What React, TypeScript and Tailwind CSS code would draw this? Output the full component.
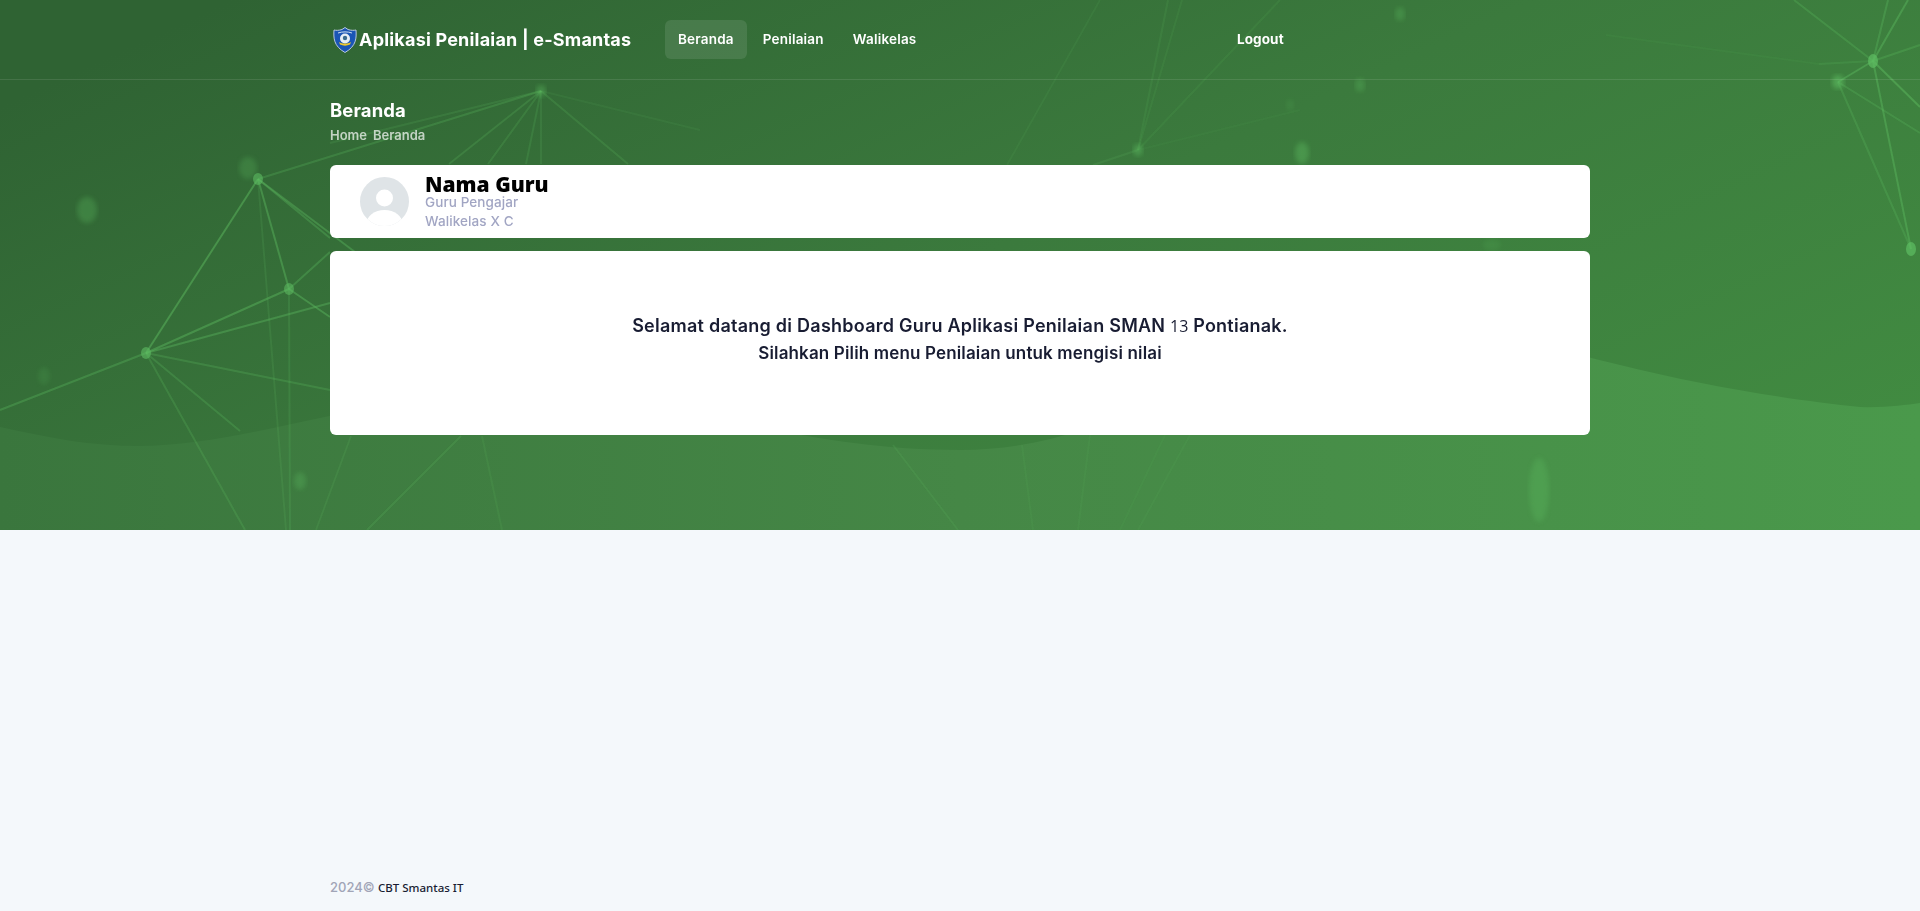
const poppins = "font-['Inter','Noto_Sans',sans-serif]";

// network drawn behind the header: [x1, y1, x2, y2, opacity]
const lines: number[][] = [
  [258, 179, 146, 353, 0.5], [258, 179, 289, 289, 0.45], [146, 353, 289, 289, 0.45], [146, 353, 330, 303, 0.4],
  [146, 353, 0, 410, 0.35], [146, 353, 245, 530, 0.25], [146, 353, 240, 431, 0.28], [146, 353, 330, 390, 0.28],
  [258, 179, 541, 91, 0.28], [258, 179, 355, 252, 0.4], [258, 179, 330, 238, 0.35], [258, 179, 286, 530, 0.16],
  [289, 289, 290, 530, 0.2], [289, 289, 330, 317, 0.45], [289, 289, 330, 252, 0.35], [541, 91, 449, 164, 0.24],
  [541, 91, 488, 164, 0.22], [541, 91, 526, 164, 0.2], [541, 91, 541, 164, 0.16], [541, 91, 628, 164, 0.22],
  [541, 91, 700, 130, 0.1], [541, 91, 330, 143, 0.18], [461, 436, 367, 530, 0.22], [482, 436, 502, 530, 0.14],
  [351, 436, 316, 530, 0.16], [893, 445, 958, 530, 0.16], [1022, 445, 1033, 530, 0.1], [1090, 435, 1078, 530, 0.1],
  [1165, 435, 1120, 530, 0.08], [1190, 435, 1138, 530, 0.1], [1873, 61, 1794, 0, 0.3], [1873, 61, 1888, 0, 0.35],
  [1873, 61, 1908, 0, 0.45], [1873, 61, 1920, 107, 0.5], [1873, 61, 1911, 249, 0.45], [1838, 82, 1911, 249, 0.28],
  [1873, 61, 1838, 82, 0.45], [1873, 61, 1920, 45, 0.3], [1873, 61, 1819, 64, 0.2], [1819, 64, 1606, 35, 0.08],
  [1838, 82, 1920, 133, 0.28], [1138, 150, 1168, 0, 0.14], [1138, 150, 1182, 0, 0.12], [1138, 150, 1280, 0, 0.12],
  [1100, 0, 1007, 165, 0.1], [1138, 150, 1093, 165, 0.16], [1138, 150, 1300, 110, 0.07],
];

// [cx, cy, rx, ry, opacity, blur]
const dots: number[][] = [
  [258, 179, 5, 6, 0.6, 0], [248, 168, 9, 11, 0.25, 1], [289, 289, 5, 6, 0.55, 0], [146, 353, 5, 6, 0.6, 0],
  [541, 91, 5, 6, 0.4, 1], [87, 210, 10, 13, 0.3, 1], [44, 376, 6, 9, 0.15, 1], [300, 481, 6, 9, 0.3, 1],
  [1873, 61, 5, 7, 0.7, 0], [1838, 82, 6, 7, 0.6, 1], [1911, 249, 5, 7, 0.7, 0], [1400, 14, 5, 7, 0.3, 1],
  [1360, 85, 5, 7, 0.3, 1], [1302, 153, 7, 11, 0.4, 1], [1290, 105, 4, 6, 0.15, 1], [1539, 490, 10, 32, 0.3, 1],
  [1492, 245, 9, 6, 0.15, 1], [1138, 150, 5, 6, 0.45, 1],
];

const HeaderBackdrop = () => (
  <svg className="absolute inset-0 h-full w-full" viewBox="0 0 1920 530" preserveAspectRatio="none" aria-hidden="true">
    <defs>
      <linearGradient id="hero" x1="0" y1="0.2" x2="1" y2="0.8">
        <stop offset="0" stopColor="#2f6333" />
        <stop offset="0.5" stopColor="#3b7a3d" />
        <stop offset="1" stopColor="#418b41" />
      </linearGradient>
      <linearGradient id="wave" x1="0" y1="0" x2="1" y2="0">
        <stop offset="0" stopColor="#3a763d" />
        <stop offset="0.5" stopColor="#458746" />
        <stop offset="1" stopColor="#4a994b" />
      </linearGradient>
      <filter id="glow">
        <feGaussianBlur stdDeviation="2.5" />
      </filter>
      <filter id="soft">
        <feGaussianBlur stdDeviation="0.5" />
      </filter>
    </defs>
    <rect width="1920" height="530" fill="url(#hero)" />
    <path
      d="M0 427 C50 438 90 446 139 446 C260 446 400 380 560 395 C720 410 810 450 960 450 C1130 450 1220 335 1400 335 C1500 335 1560 350 1620 365 C1700 385 1790 400 1860 407 C1885 408 1905 405 1920 403 L1920 530 L0 530 Z"
      fill="url(#wave)"
    />
    <g filter="url(#soft)">
      {lines.map(([x1, y1, x2, y2, o], i) => (
        <line key={i} x1={x1} y1={y1} x2={x2} y2={y2} stroke="#5cb85f" strokeWidth="2" opacity={o} />
      ))}
    </g>
    {dots.map(([cx, cy, rx, ry, o, b], i) => (
      <ellipse key={i} cx={cx} cy={cy} rx={rx} ry={ry} fill="#5ebd62" opacity={o} filter={b ? "url(#glow)" : undefined} />
    ))}
  </svg>
);

const SchoolLogo = () => (
  <svg width="24" height="26" viewBox="0 0 24 26" aria-hidden="true">
    <path d="M12 .5 L15 2.5 C18 3.5 21 3.5 23 3 C23.5 11 23.5 19 12 25.5 C.5 19 .5 11 1 3 C3 3.5 6 3.5 9 2.5 Z" fill="#1a55b5" stroke="#b9c8dc" strokeWidth="1" />
    <path d="M5 6 C9 4.5 15 4.5 19 6" fill="none" stroke="#cfe0f2" strokeWidth="1" />
    <circle cx="12" cy="11.5" r="5" fill="#e7eef5" />
    <circle cx="12" cy="11" r="2.2" fill="#3a6b8f" />
    <path d="M6 15 C9 17 15 17 18 15 L17 17.5 C14 19 10 19 7 17.5 Z" fill="#f0c92b" />
  </svg>
);

const NavLink = ({ label, active }: { label: string; active?: boolean }) => (
  <a className={`flex h-[39px] items-center rounded-md px-[13px] text-[13.5px] font-semibold tracking-[0.2px] text-white ${active ? "bg-white/10" : ""}`}>
    {label}
  </a>
);

const Avatar = () => (
  <svg className="h-[49px] w-[49px] shrink-0" viewBox="0 0 49 49" aria-hidden="true">
    <defs>
      <clipPath id="avatar-clip">
        <circle cx="24.5" cy="24.5" r="24.5" />
      </clipPath>
    </defs>
    <g clipPath="url(#avatar-clip)">
      <rect width="49" height="49" fill="#dfe4e7" />
      <circle cx="24.5" cy="21" r="8.5" fill="#fff" />
      <ellipse cx="24.5" cy="47" rx="18" ry="14" fill="#fff" />
    </g>
  </svg>
);

export default function App() {
  return (
    <div className={`flex min-h-[911px] flex-col bg-[#f4f8fb] ${poppins}`}>
      <header className="relative h-[530px] overflow-hidden">
        <HeaderBackdrop />
        <div className="relative">
          <nav className="h-20 border-b border-white/10">
            <div className="mx-auto flex h-full w-[1260px] items-center">
              <div className="flex w-[335px] items-center pl-[3px]">
                <SchoolLogo />
                <span className="ml-[2px] text-[18px] font-bold tracking-[0.2px] text-white">Aplikasi Penilaian | e-Smantas</span>
              </div>
              <div className="flex w-[572px] items-center gap-[3px]">
                <NavLink label="Beranda" active />
                <NavLink label="Penilaian" />
                <NavLink label="Walikelas" />
              </div>
              <a className="text-[13.5px] font-bold tracking-[0.1px] text-white">Logout</a>
            </div>
          </nav>

          <main className="mx-auto w-[1260px]">
            <h1 className="mt-[18px] text-[18.5px] font-bold leading-[24px] tracking-[0.1px] text-white">Beranda</h1>
            <div className="mt-[4px] flex gap-[6px] text-[13px] font-semibold leading-[18px] text-white/70">
              <span>Home</span>
              <span>Beranda</span>
            </div>

            <section className="mt-[21px] flex h-[73px] items-center rounded-md bg-white pl-[30px]">
              <Avatar />
              <div className="ml-[16px] pt-[1px]">
                <div className="relative top-[1px] font-['Open_Sans',sans-serif] text-[21px] font-extrabold leading-[20px] text-black">Nama Guru</div>
                <div className="text-[13.5px] font-medium leading-[19px] tracking-[0.1px] text-[#a1a5c3]">Guru Pengajar</div>
                <div className="text-[13.5px] font-medium leading-[19px] tracking-[0.1px] text-[#a1a5c3]">Walikelas X C</div>
              </div>
            </section>

            <section className="mt-[13px] flex h-[184px] flex-col items-center rounded-md bg-white pt-[62px] font-semibold text-[#181c32]">
              <p className="text-[18px] leading-[26px] tracking-[0.25px]">
                Selamat datang di Dashboard Guru Aplikasi Penilaian SMAN <span className="font-['Open_Sans',sans-serif] text-[16px] font-normal tracking-normal">13</span> Pontianak.
              </p>
              <p className="mt-px text-[17px] leading-[26px] tracking-[0.15px]">Silahkan Pilih menu Penilaian untuk mengisi nilai</p>
            </section>
          </main>
        </div>
      </header>

      <footer className="mx-auto mt-auto w-[1260px] pb-[14px] text-[12px] leading-[18px]">
        <span className="text-[13px] font-medium text-[#a1a5b7]">2024©</span> <span className="font-['Noto_Sans',sans-serif] text-[11.5px] font-medium text-[#181c32]">CBT Smantas IT</span>
      </footer>
    </div>
  );
}
